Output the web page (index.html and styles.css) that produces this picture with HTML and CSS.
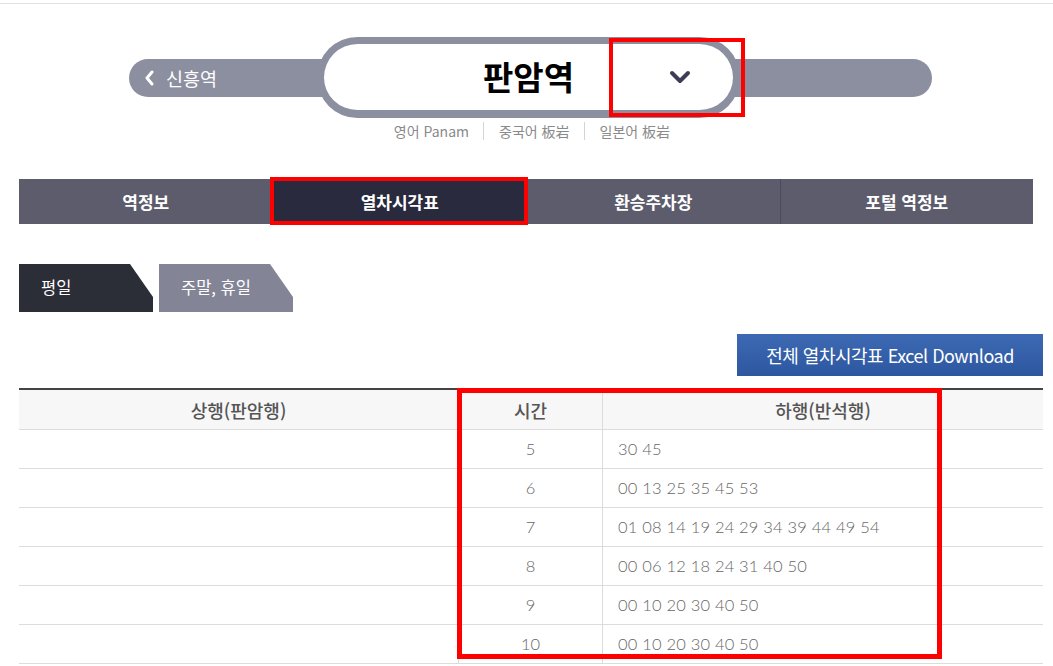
FILE: index.html
```html
<!DOCTYPE html>
<html lang="ko">
<head>
    <meta charset="UTF-8">
    <meta name="viewport" content="width=device-width, initial-scale=1.0">
    <title>판암역 열차시각표</title>
    <link rel="stylesheet" href="styles.css">
</head>
<body>
    <div class="page-top"></div>

    <div class="station">
        <div class="station-line">
            <a class="prev-station" href="#">
                <svg width="12" height="16" viewBox="0 0 12 16"><polyline points="8,2 3,8 8,14" fill="none" stroke="#fff" stroke-width="3" stroke-linecap="round" stroke-linejoin="round"/></svg>
                신흥역
            </a>
        </div>
        <div class="station-current">
            <h1>판암역</h1>
            <button class="station-select">
                <svg width="22" height="14" viewBox="0 0 22 14"><polyline points="3,3 11,11 19,3" fill="none" stroke="#3d3e55" stroke-width="4" stroke-linecap="round" stroke-linejoin="round"/></svg>
            </button>
        </div>
        <div class="mark mark-select"></div>
    </div>

    <ul class="station-names">
        <li>영어 Panam</li>
        <li>중국어 板岩</li>
        <li>일본어 板岩</li>
    </ul>

    <div class="content">
        <nav class="tabs">
            <a href="#">역정보</a>
            <a href="#" class="active">열차시각표</a>
            <a href="#">환승주차장</a>
            <a href="#">포털 역정보</a>
        </nav>

        <div class="day-tabs">
            <a href="#" class="active">평일</a>
            <a href="#">주말, 휴일</a>
        </div>

        <div class="download">
            <a href="#" class="excel-button">전체 열차시각표 Excel Download</a>
        </div>

        <div class="timetable-wrap">
            <table class="timetable">
                <thead>
                    <tr>
                        <th class="col-up">상행(판암행)</th>
                        <th class="col-hour">시간</th>
                        <th class="col-down">하행(반석행)</th>
                    </tr>
                </thead>
                <tbody>
                    <tr><td></td><td class="hour">5</td><td class="mins">30 45</td></tr>
                    <tr><td></td><td class="hour">6</td><td class="mins">00 13 25 35 45 53</td></tr>
                    <tr><td></td><td class="hour">7</td><td class="mins">01 08 14 19 24 29 34 39 44 49 54</td></tr>
                    <tr><td></td><td class="hour">8</td><td class="mins">00 06 12 18 24 31 40 50</td></tr>
                    <tr><td></td><td class="hour">9</td><td class="mins">00 10 20 30 40 50</td></tr>
                    <tr><td></td><td class="hour">10</td><td class="mins">00 10 20 30 40 50</td></tr>
                </tbody>
            </table>
            <div class="mark mark-table"></div>
        </div>
    </div>
</body>
</html>
```

FILE: styles.css
```css
body {
    margin: 0;
    font-family: "Noto Sans CJK KR", "Noto Sans", sans-serif;
    color: #333;
    background-color: #fff;
    overflow: hidden;
}
a {
    text-decoration: none;
}
.page-top {
    height: 3px;
    border-bottom: 1px solid #e2e2e2;
}

/* station header */
.station {
    position: relative;
    display: grid;
    width: 803px;
    margin: 33px 0 0 129px;
}
.station-line {
    grid-area: 1 / 1;
    align-self: center;
    height: 38px;
    background-color: #8c8f9f;
    border-radius: 19px;
    display: flex;
    align-items: center;
}
.prev-station {
    display: flex;
    align-items: center;
    gap: 10px;
    padding-left: 15px;
    color: #fff;
    font-size: 18.5px;
}
.station-current {
    grid-area: 1 / 1;
    justify-self: start;
    margin-left: 188px;
    box-sizing: border-box;
    width: 423px;
    height: 81px;
    border: 7px solid #8c8f9f;
    border-bottom-width: 8px;
    border-radius: 41px;
    background-color: #fff;
    display: grid;
    align-items: center;
}
.station-current h1 {
    grid-area: 1 / 1;
    justify-self: center;
    margin: 0 0 2px 0;
    font-size: 33px;
    font-weight: bold;
    color: #000;
}
.station-select {
    grid-area: 1 / 1;
    justify-self: end;
    margin-right: 42px;
    padding: 0;
    border: none;
    background: none;
    display: flex;
}
.mark {
    position: absolute;
    box-sizing: border-box;
    border: 4px solid #ff0000;
    pointer-events: none;
}
.mark-select {
    left: 480px;
    top: 1px;
    width: 136px;
    height: 79px;
}

.station-names {
    list-style: none;
    margin: 4px 0 0 0;
    padding: 0 0 0 10px;
    display: flex;
    justify-content: center;
    font-size: 14px;
    line-height: 18px;
    color: #8a8a8a;
}
.station-names li {
    padding: 0 14px 0 15px;
    border-left: 1px solid #d4d4d4;
}
.station-names li:first-child {
    border-left: none;
}

/* content */
.content {
    padding: 0 10px 0 19px;
}
.tabs {
    display: grid;
    grid-template-columns: repeat(4, 1fr);
    height: 45px;
    margin: 39px 10px 0 0;
    background-color: #5d5c6c;
}
.tabs a {
    display: flex;
    align-items: center;
    justify-content: center;
    color: #fff;
    font-size: 17px;
    font-weight: bold;
    border-left: 1px solid #4b4a5e;
}
.tabs a:first-child {
    border-left: none;
}
.tabs a.active {
    position: relative;
    background-color: #292a3e;
}
.tabs a.active::after {
    content: "";
    position: absolute;
    top: -2px;
    left: -4px;
    right: -2px;
    bottom: -1px;
    border: 4px solid #ff0000;
}

.day-tabs {
    display: flex;
    gap: 6px;
    margin-top: 40px;
}
.day-tabs a {
    width: 134px;
    height: 48px;
    line-height: 46px;
    padding-left: 22px;
    box-sizing: border-box;
    color: #fff;
    font-size: 16.5px;
    background-color: #838597;
    clip-path: polygon(0 0, 111px 0, 134px 33px, 134px 100%, 0 100%);
}
.day-tabs a.active {
    background-color: #2b2d37;
}

.download {
    display: flex;
    justify-content: flex-end;
    margin-top: 22px;
}
.excel-button {
    width: 306px;
    height: 42px;
    display: flex;
    align-items: center;
    justify-content: center;
    color: #fff;
    font-size: 18px;
    letter-spacing: -0.5px;
    background: linear-gradient(#3d68b3, #2d58a0);
}

.timetable-wrap {
    position: relative;
    margin-top: 12px;
}
.timetable {
    width: 100%;
    border-collapse: collapse;
    border-top: 2px solid #444;
}
.timetable th {
    height: 39px;
    padding: 0;
    background-color: #f7f7f7;
    color: #555;
    font-size: 18px;
    font-weight: 500;
    border-bottom: 1px solid #dcdcdc;
    border-left: 1px solid #dcdcdc;
}
.timetable td {
    height: 38px;
    padding: 0;
    border-bottom: 1px solid #dcdcdc;
    border-left: 1px solid #dcdcdc;
    font-family: Lato, "Open Sans", sans-serif;
    font-weight: 300;
    font-size: 16.5px;
    color: #666;
}
.timetable th:first-child,
.timetable td:first-child {
    border-left: none;
}
.col-up {
    width: 439px;
}
.col-hour {
    width: 143px;
}
.hour {
    text-align: center;
}
.mins {
    padding-left: 15px !important;
    letter-spacing: 0.2px;
}
.mark-table {
    left: 438px;
    top: 0;
    width: 485px;
    height: 271px;
    border-width: 5px;
}
```
